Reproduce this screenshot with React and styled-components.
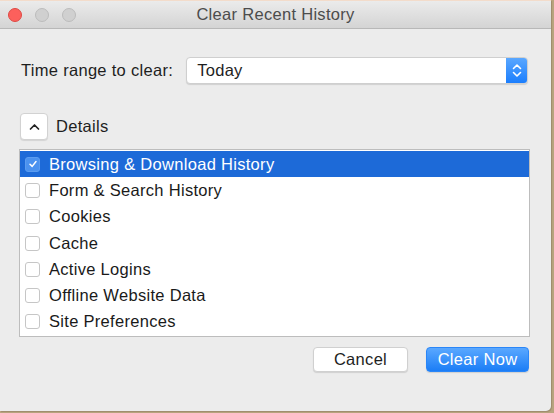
import React from "react";
import styled, { createGlobalStyle } from "styled-components";

const Global = createGlobalStyle`
  html, body { margin: 0; padding: 0; }
  body {
    background: #b9a47f;
    font-family: "Liberation Sans", Arial, sans-serif;
    width: 554px;
    height: 413px;
    overflow: hidden;
  }
`;

const Window = styled.div`
  width: 551px;
  height: 410px;
  background: #ececec;
  border-bottom-right-radius: 5px;
  border-top: 1px solid #f3dccb;
  box-shadow: 1px 1px 1px rgba(0,0,0,0.15);
  display: flex;
  flex-direction: column;
`;

const TitleBar = styled.div`
  height: 27px;
  flex-shrink: 0;
  background: linear-gradient(#ebebeb, #d4d4d4);
  border-bottom: 1px solid #b8b8b8;
  display: flex;
  align-items: center;
  position: relative;
  padding-left: 8px;
  gap: 13px;
`;

const Light = styled.span`
  width: 12px;
  height: 12px;
  border-radius: 50%;
  background: ${p => (p.$red ? "#fc605c" : "#d0d0d0")};
  border: 0.5px solid ${p => (p.$red ? "#de4a44" : "#bcbcbc")};
`;

const Title = styled.div`
  position: absolute;
  left: 0;
  right: 0;
  text-align: center;
  font-size: 16.5px;
  letter-spacing: 0.3px;
  color: #4c4c4c;
  pointer-events: none;
`;

const Body = styled.div`
  flex: 1;
  padding: 28px 21px 0 19px;
  display: flex;
  flex-direction: column;
  font-size: 16.5px;
  letter-spacing: 0.3px;
`;

const RangeRow = styled.div`
  display: flex;
  align-items: center;
  padding-left: 2px;
  gap: 13px;
  color: #1e1e1e;
`;

const Select = styled.div`
  flex: 1;
  height: 25px;
  background: #fff;
  border: 1px solid #cfcfcf;
  border-radius: 4px;
  box-shadow: 0 1px 1px rgba(0,0,0,0.12);
  display: flex;
  align-items: center;
  overflow: hidden;
  margin-right: 2px;
`;

const SelectText = styled.span`
  flex: 1;
  padding-left: 10px;
  color: #1e1e1e;
`;

const Stepper = styled.span`
  width: 21px;
  height: 100%;
  background: linear-gradient(#5aa7ff, #1b7efd);
  display: flex;
  align-items: center;
  justify-content: center;
`;

const DetailsRow = styled.div`
  display: flex;
  align-items: center;
  gap: 8px;
  margin-top: 29px;
  padding-left: 1px;
  color: #1e1e1e;
`;

const SquareBtn = styled.span`
  width: 26px;
  height: 25px;
  background: #fff;
  border: 1px solid #d2d2d2;
  border-radius: 4px;
  box-shadow: 0 1px 1px rgba(0,0,0,0.1);
  display: flex;
  align-items: center;
  justify-content: center;
`;

const List = styled.div`
  margin-top: 9px;
  background: #fff;
  border: 1px solid #bdbdbd;
  padding: 1px 0;
`;

const Row = styled.div`
  height: 26.3px;
  display: flex;
  align-items: center;
  padding-left: 5px;
  gap: 9px;
  color: ${p => (p.$sel ? "#fff" : "#1a1a1a")};
  background: ${p => (p.$sel ? "#1d6ad8" : "transparent")};
`;

const Box = styled.span`
  width: 15px;
  height: 15px;
  box-sizing: border-box;
  border-radius: 3px;
  border: 1px solid ${p => (p.$on ? "#5b9cf0" : "#c6c6c6")};
  background: ${p => (p.$on ? "#4b92ef" : "#fff")};
  display: flex;
  align-items: center;
  justify-content: center;
`;

const Footer = styled.div`
  display: flex;
  justify-content: flex-end;
  gap: 18px;
  margin-top: 10px;
  margin-right: 1px;
`;

const Button = styled.button`
  height: 25px;
  width: ${p => p.$w}px;
  border-radius: 4px;
  font-family: inherit;
  font-size: 16.5px;
  letter-spacing: 0.3px;
  padding: 0;
  border: 1px solid ${p => (p.$primary ? "#2a86f8" : "#d0d0d0")};
  color: ${p => (p.$primary ? "#fff" : "#1e1e1e")};
  background: ${p => (p.$primary ? "linear-gradient(#5aa8ff, #1b7df6)" : "#fff")};
  box-shadow: 0 1px 1px rgba(0,0,0,0.12);
`;

const items = [
  "Browsing & Download History",
  "Form & Search History",
  "Cookies",
  "Cache",
  "Active Logins",
  "Offline Website Data",
  "Site Preferences",
];

export default function App() {
  return (
    <>
      <Global />
      <Window>
        <TitleBar>
          <Light $red />
          <Light />
          <Light />
          <Title>Clear Recent History</Title>
        </TitleBar>
        <Body>
          <RangeRow>
            <span>Time range to clear:</span>
            <Select>
              <SelectText>Today</SelectText>
              <Stepper>
                <svg width="10" height="15" viewBox="0 0 10 15">
                  <path d="M1.5 5.5 L5 2 L8.5 5.5 M1.5 9.5 L5 13 L8.5 9.5" fill="none" stroke="#fff" strokeWidth="1.6" strokeLinecap="round" strokeLinejoin="round" />
                </svg>
              </Stepper>
            </Select>
          </RangeRow>
          <DetailsRow>
            <SquareBtn>
              <svg width="11" height="8" viewBox="0 0 11 8">
                <path d="M1.5 6 L5.5 2 L9.5 6" fill="none" stroke="#222" strokeWidth="1.7" strokeLinecap="round" strokeLinejoin="round" />
              </svg>
            </SquareBtn>
            <span>Details</span>
          </DetailsRow>
          <List>
            {items.map((t, i) => (
              <Row key={t} $sel={i === 0}>
                <Box $on={i === 0}>
                  {i === 0 && (
                    <svg width="10" height="10" viewBox="0 0 10 10">
                      <path d="M2 5.2 L4.2 7.4 L8 2.5" fill="none" stroke="#fff" strokeWidth="1.5" strokeLinecap="round" strokeLinejoin="round" />
                    </svg>
                  )}
                </Box>
                <span>{t}</span>
              </Row>
            ))}
          </List>
          <Footer>
            <Button $w={95}>Cancel</Button>
            <Button $w={103} $primary>Clear Now</Button>
          </Footer>
        </Body>
      </Window>
    </>
  );
}
